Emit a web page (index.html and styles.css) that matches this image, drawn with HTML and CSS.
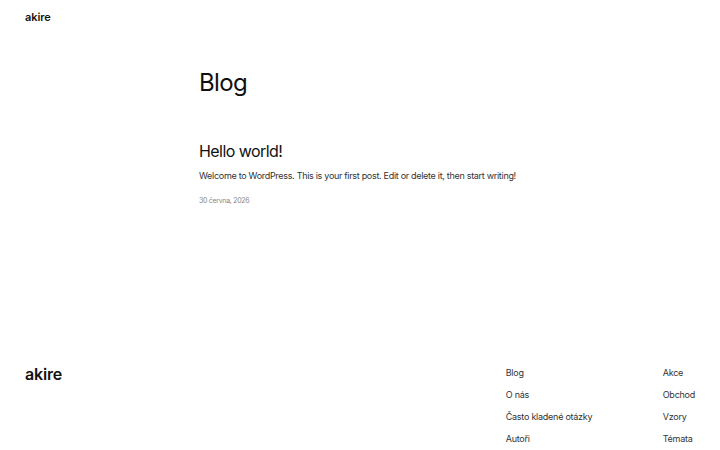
FILE: index.html
```html
<!DOCTYPE html>
<html lang="cs">
<head>
<meta charset="utf-8">
<title>Blog – akire</title>
<link rel="stylesheet" href="styles.css">
</head>
<body>
<header class="site-header">
  <a class="site-title" href="#">akire</a>
</header>
<main class="main">
  <h1 class="page-title">Blog</h1>
  <article class="post">
    <h2 class="post-title">Hello world!</h2>
    <p class="post-excerpt">Welcome to WordPress. This is your first post. Edit or delete it, then start writing!</p>
    <div class="post-date">30 června, 2026</div>
  </article>
</main>
<footer class="site-footer">
  <a class="footer-title" href="#">akire</a>
  <nav class="footer-nav">
    <ul class="footer-col">
      <li><a href="#">Blog</a></li>
      <li><a href="#">O nás</a></li>
      <li><a href="#">Často kladené otázky</a></li>
      <li><a href="#">Autoři</a></li>
    </ul>
    <ul class="footer-col">
      <li><a href="#">Akce</a></li>
      <li><a href="#">Obchod</a></li>
      <li><a href="#">Vzory</a></li>
      <li><a href="#">Témata</a></li>
    </ul>
  </nav>
</footer>
</body>
</html>
```
FILE: styles.css
```css
* { box-sizing: border-box; }
html, body { margin: 0; padding: 0; }
body {
  font-family: Inter, "Noto Sans", "DejaVu Sans", sans-serif;
  color: #111;
  background: #fff;
  width: 720px;
  height: 450px;
  overflow: hidden;
}
a { color: inherit; text-decoration: none; }

.site-header {
  display: flex;
  align-items: flex-start;
  padding: 10px 25px 0;
  height: 40px;
}
.site-title {
  display: block;
  font-size: 11px;
  line-height: 14px;
  font-weight: 600;
  letter-spacing: -0.1px;
}

.main {
  width: 322px;
  margin: 0 auto;
  height: 322px;
  padding-top: 28px;
}
.page-title {
  margin: 0;
  font-size: 24px;
  font-weight: 400;
  letter-spacing: -0.6px;
  line-height: 30px;
}
.post { margin-top: 42px; }
.post-title {
  margin: 0;
  font-size: 16px;
  font-weight: 400;
  letter-spacing: -0.55px;
  line-height: 22px;
}
.post-excerpt {
  margin: 7px 0 0;
  font-size: 9px;
  line-height: 14px;
  color: #333;
  letter-spacing: -0.3px;
  white-space: nowrap;
}
.post-date {
  margin-top: 13px;
  font-size: 7px;
  line-height: 10px;
  color: #888;
  letter-spacing: -0.3px;
}

.site-footer {
  display: flex;
  justify-content: space-between;
  align-items: flex-start;
  padding: 0 25px;
}
.footer-title {
  display: block;
  font-size: 16px;
  line-height: 20px;
  font-weight: 600;
  letter-spacing: -0.2px;
  margin-top: 2px;
}
.footer-nav {
  display: flex;
}
.footer-col {
  list-style: none;
  margin: 0;
  padding: 0;
  display: flex;
  flex-direction: column;
  font-size: 9px;
  line-height: 22px;
  color: #333;
  letter-spacing: -0.25px;
}
.footer-col:first-child { width: 157px; }
```
